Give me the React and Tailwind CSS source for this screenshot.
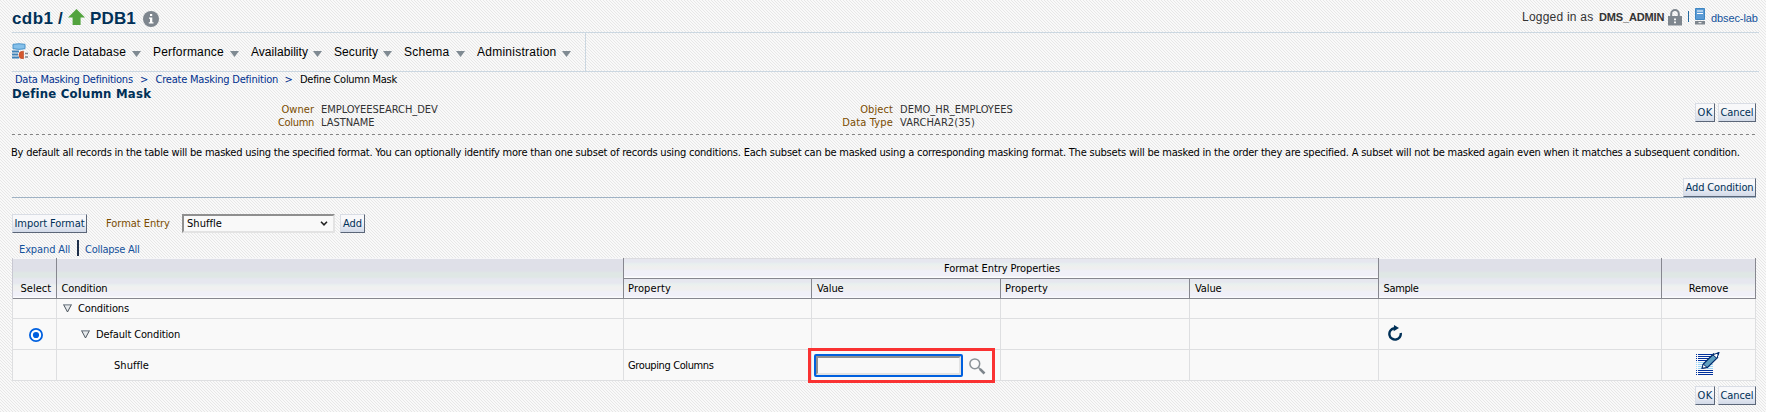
import React from 'react';

function Button({ children, className = '' }) {
  return (
    <button
      className={
        'flex h-[19px] shrink-0 items-center justify-center whitespace-nowrap border border-b-[#5b6678] border-l-[#d9dde5] border-r-[#5b6678] border-t-[#d9dde5] bg-linear-to-b from-[#f8f8fa] from-30% to-[#d2dae8] leading-[13px] text-[#003057] ' +
        className
      }
    >
      {children}
    </button>
  );
}

function Arrow({ className }) {
  return (
    <svg className={'mt-[3px] h-[6px] w-[9px] ' + className} viewBox="0 0 9 6">
      <path d="M0 0h9L4.5 6z" fill="#7f8a92" />
    </svg>
  );
}

function Twisty() {
  return (
    <svg className="h-[9px] w-[9px] shrink-0" viewBox="0 0 9 9">
      <path d="M.7 .8h7.6L4.5 8z" fill="#e6eaed" stroke="#4b535c" strokeWidth="1" />
      <path d="M0 .5h9" stroke="#9aa2aa" />
    </svg>
  );
}

const MENUS = [
  { label: 'Oracle Database', text: 'w-[99px] tracking-[0.2px]', gap: 'mr-[12px]' },
  { label: 'Performance', text: 'w-[77px] tracking-[0.2px]', gap: 'mr-[12px]' },
  { label: 'Availability', text: 'w-[62px] tracking-[0.04px]', gap: 'mr-[12px]' },
  { label: 'Security', text: 'w-[49px] tracking-[0.08px]', gap: 'mr-[12px]' },
  { label: 'Schema', text: 'w-[52px] tracking-[0.25px]', gap: 'mr-[12px]' },
  { label: 'Administration', text: 'w-[85px] tracking-[0.25px]', gap: 'mr-[14px]' },
];

const TALL =
  'bg-[linear-gradient(180deg,#f6f6f8_0px,#f6f6f8_1px,#dfe0e8_1px,#dfe0e8_13px,#dfe7e5_15px,#dfe7e5_19px,#e6e7ef_21px,#e6e7ef_25px,#eaf0f0_27px,#f0f0f0_29px,#f0f0f0_32px,#f0f0f8_34px,#f0f0f8_38px,#fafafc_39px)]';
const SHORT =
  'bg-[linear-gradient(180deg,#dcdce0_0px,#dcdce0_1px,#e6e7ef_1px,#e6e7ef_4px,#e8f0ef_6px,#efefee_9px,#efeff0_11px,#f0f0f8_13px,#f0f0f8_18px,#fcfcfd_19px)]';
const SUB =
  'bg-[linear-gradient(180deg,#e6e7ef_0px,#e6e7ef_3px,#e8f0ef_5px,#efefee_8px,#efeff0_11px,#f0f0f8_13px,#f0f0f8_17px,#fcfcfd_19px)]';
const HEAD = 'flex items-end border-b border-r border-[#86878f] pb-[3px] leading-[13px] ';
const CELL = 'flex items-center border-b border-r border-[#dedfe1] ';
const COLS = 'grid-cols-[44px_567px_188px_189px_189px_189px_283px_94px]';

function Row({ height, cells }) {
  return (
    <div className={'grid border-l border-[#dedfe1] bg-[#f9f9f9] leading-[13px] ' + COLS + ' ' + height}>
      {Array.from({ length: 8 }, (_, i) => (
        <div key={i} className={CELL + (i === 0 || i === 7 ? 'justify-center' : '')}>
          {cells[i]}
        </div>
      ))}
    </div>
  );
}

export default function App() {
  return (
    <div className="h-[412px] w-[1766px] overflow-hidden bg-[#f9f9f9] bg-[linear-gradient(45deg,#f9f9f9_44%,#e7e7e7_44%,#e7e7e7_56%,#f9f9f9_56%)] bg-size-[3px_3px] pl-[12px] font-['DejaVu_Sans_Condensed','DejaVu_Sans',sans-serif] text-[11px] tracking-[-0.1px] text-black">
      <header className="flex h-[33px] w-[1747px] items-start justify-between border-b border-[#cbd7e1] font-['Liberation_Sans',sans-serif]">
        <h1 className="flex pt-[9px] text-[17px] font-bold leading-[20px] text-[#003057]">
          <span className="w-[46px] tracking-[0.4px]">cdb1</span>
          <span className="w-[10px]">/</span>
          <svg className="h-[17px] w-[17px]" viewBox="0 0 17 17">
            <path d="M8.5 0L17 8.5h-4.4V16H4.6V8.5H0z" fill="#52a33e" />
          </svg>
          <span className="ml-[5px] w-[53px] tracking-[0.16px]">PDB1</span>
          <svg className="mt-[2px] h-[16px] w-[16px]" viewBox="0 0 16 16">
            <circle cx="8" cy="8" r="8" fill="#7e868e" />
            <path d="M7 3h2.2v2H7zM6 6.4h3.3v4.8h1.2v1.3H5.8v-1.3H7V7.7H6z" fill="#fff" />
          </svg>
        </h1>
        <div className="flex pt-[10px] text-[12px] leading-[15px] text-[#333]">
          <span className="w-[77px] tracking-[0.22px]">Logged in as</span>
          <span className="w-[69px] text-[11px] font-bold tracking-[-0.15px]">DMS_ADMIN</span>
          <svg className="-mt-px h-[17px] w-[14px]" viewBox="0 0 14 17">
            <path d="M3.2 8V4.8a3.8 3.8 0 0 1 7.6 0V8" fill="none" stroke="#7e868e" strokeWidth="2" />
            <path d="M0 7h14v9.500H0z" fill="#7e868e" />
            <path d="M6 9.500h2v1.800H6zM6 12.500h2v1.800H6z" fill="#f4f4f4" />
          </svg>
          <span className="ml-[6px] mt-[1px] h-[11px] w-px bg-[#22689e]" />
          <svg className="-mt-[2px] ml-[6px] h-[17px] w-[10px]" viewBox="0 0 10 17">
            <path d="M.5 .5h9v11h-9z" fill="#5b9bd5" stroke="#3e86c2" />
            <path d="M2 3h6M2 5.500h6" stroke="#fff" />
            <path d="M0 13h10v3.500H0z" fill="#7e868e" />
            <path d="M3.500 14.700h3" stroke="#fff" />
          </svg>
          <span className="ml-[6px] w-[48px] pt-px text-[11px] leading-[14px] text-[#14529c]">dbsec-lab</span>
        </div>
      </header>

      <nav className="flex h-[39px] w-[1747px] border-b border-[#cbd7e1] font-['Liberation_Sans',sans-serif] text-[12px]">
        <div className="flex h-full items-center border-r border-[#cbd7e1]">
          <svg className="-mt-[3px] mr-[5px] h-[16px] w-[16px]" viewBox="0 0 16 16">
            <path d="M1 1.300Q7 .2 13 1.300V5.700Q7 7 1 5.700z" fill="#85c0ea" stroke="#4a92c8" />
            <path d="M0 8.500h7M0 11.500h6M0 14.500h7" stroke="#3f82b8" strokeWidth="1.800" />
            <path d="M11.500 8.300h-1.200a3.300 3.700 0 0 0 0 7.400h1.200z" fill="#d4572e" stroke="#b9431f" strokeWidth=".6" />
            <path d="M13 10.500h3M13 14h3" stroke="#7e868e" strokeWidth="1.500" />
          </svg>
          {MENUS.map((m) => (
            <React.Fragment key={m.label}>
              <span className={'whitespace-nowrap leading-[15px] ' + m.text}>{m.label}</span>
              <Arrow className={m.gap} />
            </React.Fragment>
          ))}
        </div>
      </nav>

      <div className="flex h-[14px] whitespace-nowrap pl-[3px] leading-[15px] text-[#00308f]">
        <span className="w-[125px] tracking-[-0.25px]">Data Masking Definitions</span>
        <span className="w-[15.500px]">&gt;</span>
        <span className="w-[129px] tracking-[-0.21px]">Create Masking Definition</span>
        <span className="w-[15.500px]">&gt;</span>
        <span className="tracking-[-0.28px] text-black">Define Column Mask</span>
      </div>
      <h2 className="h-[17px] text-[13px] font-bold leading-[16px] tracking-[0.24px] text-[#003057]">Define Column Mask</h2>

      <section className="flex h-[31px] w-[1744px] whitespace-nowrap leading-[13px]">
        <div className="w-[302px] text-right text-[#7a4c00]">
          <div className="tracking-[0.04px]">Owner</div>
          <div className="tracking-[-0.3px]">Column</div>
        </div>
        <div className="w-[399px] pl-[7px] text-[#333]">
          <div className="tracking-[-0.02px]">EMPLOYEESEARCH_DEV</div>
          <div className="tracking-[-0.04px]">LASTNAME</div>
        </div>
        <div className="w-[180px] text-right text-[#7a4c00]">
          <div className="tracking-[0.1px]">Object</div>
          <div className="tracking-[0.16px]">Data Type</div>
        </div>
        <div className="grow pl-[7px] text-[#333]">
          <div className="tracking-[0.03px]">DEMO_HR_EMPLOYEES</div>
          <div className="tracking-[0.1px]">VARCHAR2(35)</div>
        </div>
        <div className="flex items-start gap-[3px]">
          <Button className="w-[20px] tracking-[0.3px]">OK</Button>
          <Button className="w-[38px]">Cancel</Button>
        </div>
      </section>
      <div className="h-px w-[1744px] bg-[repeating-linear-gradient(90deg,#858585_0px,#858585_3px,transparent_3px,transparent_6px)]" />

      <p className="-ml-[1px] mt-[11px] h-[13px] whitespace-nowrap leading-[13px] tracking-[-0.209px]">
        By default all records in the table will be masked using the specified format. You can optionally identify more than one subset of records using conditions. Each subset can be masked using a corresponding masking format. The subsets will be masked in the order they are specified. A subset will not be masked again even when it matches a subsequent condition.
      </p>

      <div className="flex h-[39px] w-[1744px] items-end justify-end border-b border-[#9fb2c4]">
        <Button className="w-[73px] tracking-[-0.12px]">Add Condition</Button>
      </div>

      <div className="mt-[16px] flex h-[19px] items-center">
        <Button className="w-[75px] tracking-[-0.06px]">Import Format</Button>
        <span className="ml-[19px] w-[76px] leading-[13px] tracking-[-0.03px] text-[#7a4c00]">Format Entry</span>
        <div className="flex h-[19px] w-[153px] items-center justify-between border-2 border-b-[#e3e3e3] border-l-[#8f8f8f] border-r-[#e3e3e3] border-t-[#8f8f8f] bg-[#f9f9f9] pl-[3px] pr-[5px] leading-[13px]">
          <span className="tracking-[0.04px]">Shuffle</span>
          <svg className="h-[5px] w-[8px]" viewBox="0 0 8 5">
            <path d="M1 .8l3 3 3-3" fill="none" stroke="#222" strokeWidth="1.600" />
          </svg>
        </div>
        <Button className="ml-[5px] w-[25px]">Add</Button>
      </div>

      <div className="flex h-[25px] pl-[7px] pt-[7px] leading-[13px] text-[#14529c]">
        <span className="w-[58px] pt-[3px] tracking-[-0.12px]">Expand All</span>
        <span className="h-[16px] w-[2px] bg-[#1e2f4a]" />
        <span className="ml-[6px] pt-[3px] tracking-[-0.25px]">Collapse All</span>
      </div>

      <div className="w-[1744px]">
        <div className={'grid grid-rows-[21px_20px] border-l border-[#c8c8d2] ' + COLS}>
          <div className={HEAD + TALL + ' row-span-2 pl-[7.500px] tracking-[0px]'}>Select</div>
          <div className={HEAD + TALL + ' row-span-2 pl-[4.500px] tracking-[-0.14px]'}>Condition</div>
          <div className={HEAD + SHORT + ' col-span-4 justify-center pl-[2px] tracking-[-0.06px]'}>Format Entry Properties</div>
          <div className={HEAD + TALL + ' row-span-2 pl-[4.500px] tracking-[-0.35px]'}>Sample</div>
          <div className={HEAD + TALL + ' row-span-2 justify-center'}>Remove</div>
          <div className={HEAD + SUB + ' pl-[4px] tracking-[0.15px]'}>Property</div>
          <div className={HEAD + SUB + ' pl-[5px]'}>Value</div>
          <div className={HEAD + SUB + ' pl-[4px] tracking-[0.15px]'}>Property</div>
          <div className={HEAD + SUB + ' pl-[5px]'}>Value</div>
        </div>

        <Row
          height="h-[20px]"
          cells={{
            1: (
              <div className="flex items-center gap-[6px] pl-[6px] tracking-[-0.14px]">
                <Twisty />
                Conditions
              </div>
            ),
          }}
        />
        <Row
          height="h-[31px]"
          cells={{
            0: (
              <svg className="ml-[3px] mt-[2px] h-[14px] w-[14px]" viewBox="0 0 14 14">
                <circle cx="7" cy="7" r="6.100" fill="#fff" stroke="#0060df" strokeWidth="1.800" />
                <circle cx="7" cy="7" r="3.100" fill="#0060df" />
              </svg>
            ),
            1: (
              <div className="flex items-center gap-[6px] pl-[24px] tracking-[-0.14px]">
                <Twisty />
                Default Condition
              </div>
            ),
            6: (
              <svg className="ml-[8px] mt-[-2px] h-[16px] w-[16px]" viewBox="0 0 16 16">
                <path d="M7 3.300A5.700 5.700 0 1 0 13.700 8" fill="none" stroke="#003057" strokeWidth="2.400" />
                <path d="M7 0l5 3-5.400 3.200z" fill="#003057" />
              </svg>
            ),
          }}
        />
        <Row
          height="h-[31px]"
          cells={{
            1: <span className="pl-[57px] tracking-[0.04px]">Shuffle</span>,
            2: <span className="pl-[4px] tracking-[-0.38px]">Grouping Columns</span>,
            3: (
              <div className="relative z-10 -my-[5px] -ml-[4px] flex h-[35px] w-[187px] shrink-0 items-center border-[3px] border-[#fa3232] pl-[3px]">
                <div className="h-[23px] w-[149px] rounded-[2px] border-2 border-[#0060df]">
                  <div className="h-full w-full border-2 border-b-[#e3e3e3] border-l-[#8f8f8f] border-r-[#e3e3e3] border-t-[#8f8f8f] bg-[#f9f9f9]" />
                </div>
                <svg className="ml-[6px] mt-[2px] h-[17px] w-[17px]" viewBox="0 0 17 17">
                  <circle cx="5.800" cy="5.800" r="4.900" fill="#fbfbfb" stroke="#8b9297" strokeWidth="1.500" />
                  <path d="M9.500 9.500l1.500 1.500" stroke="#8b9297" strokeWidth="1.500" />
                  <path d="M10.800 10.800l4.700 4.700" stroke="#7d858b" strokeWidth="2.600" />
                </svg>
              </div>
            ),
            7: (
              <svg className="-ml-px -mt-[2px] h-[24px] w-[24px]" viewBox="0 0 24 24" shapeRendering="crispEdges">
                <path d="M2 2.500h14M2 4.500h14M2 6.500h11M2 8.500h9M2 18.500h15M2 20.500h15M2 22.500h15M0 2.500h1M0 4.500h1M0 6.500h1M0 8.500h1M0 18.500h1M0 20.500h1M0 22.500h1" stroke="#00309c" />
                <path d="M2 10.500h7M2 12.500h5M2 14.500h4M2 16.500h4M14 12.500h3M12 14.500h5M11 16.500h6M0 10.500h1M0 12.500h1M0 14.500h1M0 16.500h1" stroke="#9cd6f7" />
                <g shapeRendering="auto">
                  <path d="M6.200 16.200l1.300-4.400L17.500 2l4 3.600-10 9.800z" fill="#5f9fc0" stroke="#002a6b" strokeWidth="1.300" />
                  <path d="M6.200 16.200l1-4.200 4 3.500z" fill="#fff" stroke="#002a6b" strokeWidth="1" />
                  <path d="M16.800 2.800L23 .5l-2.200 5.800z" fill="#fff" stroke="#002a6b" strokeWidth="1" />
                  <path d="M20.500 1.200L23.500 0l-1 3.500z" fill="#002a6b" />
                </g>
              </svg>
            ),
          }}
        />
      </div>

      <div className="mt-[5px] flex w-[1744px] justify-end gap-[3px]">
        <Button className="w-[20px] tracking-[0.3px]">OK</Button>
        <Button className="w-[38px]">Cancel</Button>
      </div>
    </div>
  );
}
